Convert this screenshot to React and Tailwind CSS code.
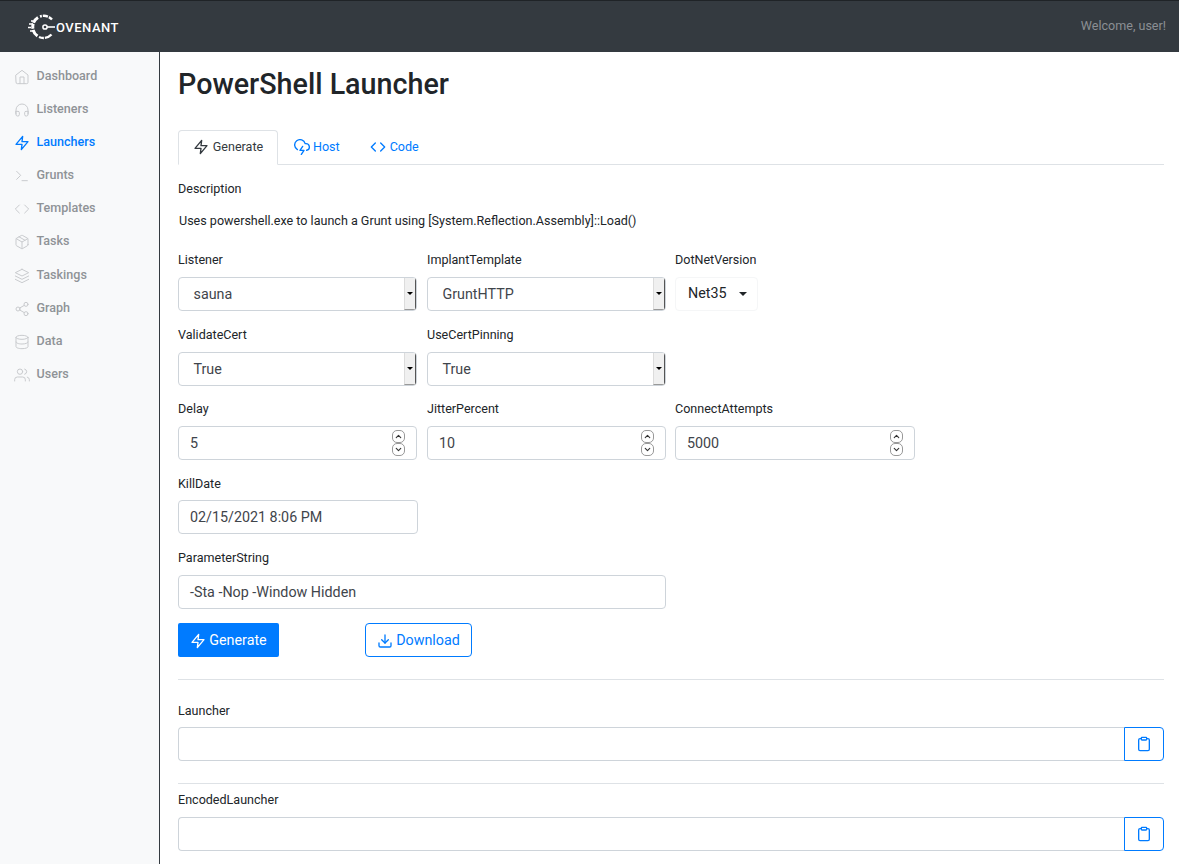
import React from "react";
import { FiHome, FiHeadphones, FiZap, FiTerminal, FiCode, FiPackage, FiLayers, FiShare2, FiDatabase, FiUsers, FiCloudLightning, FiDownload, FiClipboard, FiChevronUp, FiChevronDown } from "react-icons/fi";

const nav = [
  ["Dashboard", FiHome, "h-[33px]"],
  ["Listeners", FiHeadphones, "h-[33px]"],
  ["Launchers", FiZap, "h-[33px]"],
  ["Grunts", FiTerminal, "h-[33px]"],
  ["Templates", FiCode, "h-[33px]"],
  ["Tasks", FiPackage, "h-[33px]"],
  ["Taskings", FiLayers, "h-[34px] pt-[1px]"],
  ["Graph", FiShare2, "h-[33px]"],
  ["Data", FiDatabase, "h-[33px]"],
  ["Users", FiUsers, "h-[33px]"],
];

function Logo() {
  return (
    <div className="flex items-center mt-[1px]">
      <svg width="29" height="28" viewBox="0 0 29 28" fill="none" stroke="#fff">
        <path d="M24 6.5 A11 11 0 0 0 12 3.5" strokeWidth="2.4" strokeDasharray="4 1 5 1 6" />
        <path d="M10 4.5 A11 11 0 0 0 9.5 23" strokeWidth="3" strokeDasharray="7 1 5 1 9" />
        <path d="M11 24 A11 11 0 0 0 23.5 21.5" strokeWidth="2.4" strokeDasharray="5 1 8" />
        <circle cx="17" cy="14" r="2.1" strokeWidth="1.5" />
        <path d="M19 14 H27" strokeWidth="1.6" />
        <path d="M1 11 H5 M0 14.5 H3 M2 18 H5 M3 8 H5" strokeWidth="1.5" />
      </svg>
      <span className="-ml-[1px] text-white text-[13px] font-medium tracking-[0.5px] leading-none">OVENANT</span>
    </div>
  );
}

function Label({ children, className = "" }) {
  return <div className={`text-[12.55px] leading-[19px] text-[#212529] ${className}`}>{children}</div>;
}

function SelectBox({ value }) {
  return (
    <div className="h-[34px] w-[239px] flex border border-[#ced4da] rounded-[4px] bg-white overflow-hidden">
      <div className="flex-1 pl-[14.5px] text-[14.3px] leading-[32px] text-[#3f454b]">{value}</div>
      <div className="w-[12px] flex items-center justify-center bg-[#f0f0f0] border-l border-[#dcdcdc] border-r border-r-[#555] border-b border-b-[#999]">
        <div className="w-0 h-0 border-l-[3px] border-r-[3px] border-t-[3px] border-l-transparent border-r-transparent border-t-black" />
      </div>
    </div>
  );
}

function NumberBox({ value, className = "w-[239px]" }) {
  return (
    <div className={`relative h-[34px] border border-[#ced4da] rounded-[4px] bg-white pl-[11px] text-[14.3px] leading-[32px] text-[#3f454b] ${className}`}>
      {value}
      <div className="absolute right-[11px] top-[3px] flex flex-col">
        <div className="w-[13px] h-[13px] border border-[#999] rounded-[5px] flex items-center justify-center -mb-[0.5px]">
          <FiChevronUp size={9} strokeWidth={3} color="#333" />
        </div>
        <div className="w-[13px] h-[13px] border border-[#999] rounded-[5px] flex items-center justify-center">
          <FiChevronDown size={9} strokeWidth={3} color="#333" />
        </div>
      </div>
    </div>
  );
}

function TextBox({ value, className = "" }) {
  return (
    <div className={`h-[34px] border border-[#ced4da] rounded-[4px] bg-white pl-[11px] text-[14.3px] leading-[32px] text-[#3f454b] ${className}`}>
      {value}
    </div>
  );
}

function CopyField({ label, top, gap }) {
  return (
    <div className={top}>
      <Label className={gap}>{label}</Label>
      <div className="flex h-[34px]">
        <div className="flex-1 border border-[#ced4da] rounded-l-[4px] border-r-0 bg-white" />
        <div className="w-[40px] border border-[#007bff] rounded-r-[4px] flex items-center justify-center text-[#007bff]">
          <FiClipboard size={16} />
        </div>
      </div>
    </div>
  );
}

export default function App() {
  return (
    <div className="w-[1179px] h-[864px] overflow-hidden bg-white font-['Roboto',sans-serif] flex flex-col">
      <header className="h-[52px] shrink-0 bg-[#343a40] border-t border-[#1f2327] flex items-center justify-between pl-[28px] pr-[13px]">
        <Logo />
        <span className="text-[12.55px] text-[#8b8f94]">Welcome, user!</span>
      </header>
      <div className="flex flex-1 min-h-0">
        <aside className="w-[160px] shrink-0 bg-[#f8f9fa] border-r border-[#343a40] pt-[8px]">
          {nav.map(([name, Icon, h]) => {
            const active = name === "Launchers";
            return (
              <div key={name} className={`${h} flex items-center pl-[13.5px]`}>
                <Icon size={16} strokeWidth={active ? 2 : 1.5} className={`mr-[7px] ${active ? "text-[#007bff]" : "text-[#c9cbce]"}`} />
                <span className={`text-[12.55px] font-medium ${active ? "text-[#007bff]" : "text-[#8f9397]"}`}>{name}</span>
              </div>
            );
          })}
        </aside>
        <main className="flex-1 min-w-0 pl-[18px] pr-[15px]">
          <h1 className="text-[28.7px] font-medium leading-[34px] text-[#212529] pt-[15px] h-[63px] m-0">PowerShell Launcher</h1>
          <div className="flex h-[35px] border-b border-[#dee2e6] text-[12.55px] mt-[15px]">
            <div className="h-[35px] w-[100px] border border-[#dee2e6] border-b-white rounded-t-[4px] bg-white flex items-center justify-center gap-[4px] pb-[1px] text-[#343a40]">
              <FiZap size={16} />
              <span>Generate</span>
            </div>
            <div className="h-[34px] flex items-center pl-[16px] gap-[3px] text-[#007bff]">
              <FiCloudLightning size={16} />
              <span>Host</span>
            </div>
            <div className="h-[34px] flex items-center pl-[30px] gap-[4px] text-[#007bff]">
              <FiCode size={16} />
              <span>Code</span>
            </div>
          </div>
          <Label className="mt-[14px]">Description</Label>
          <div className="text-[12.55px] leading-[19px] text-[#212529] mt-[13px] pl-[1px]">Uses powershell.exe to launch a Grunt using [System.Reflection.Assembly]::Load()</div>

          <div className="grid grid-cols-[249px_248px_1fr] mt-[20px]">
            <div>
              <Label className="mb-[8px]">Listener</Label>
              <SelectBox value="sauna" />
            </div>
            <div>
              <Label className="mb-[8px]">ImplantTemplate</Label>
              <SelectBox value="GruntHTTP" />
            </div>
            <div>
              <Label className="mb-[8px]">DotNetVersion</Label>
              <div className="h-[34px] w-[83px] border border-[#f5f6f7] rounded-[4px] flex items-center pl-[12px] text-[14.3px] text-[#212529]">
                Net35
                <div className="ml-[12px] w-0 h-0 border-l-[4.5px] border-r-[4.5px] border-t-[4.5px] border-l-transparent border-r-transparent border-t-[#212529]" />
              </div>
            </div>
          </div>

          <div className="grid grid-cols-[249px_248px_1fr] mt-[13.5px]">
            <div>
              <Label className="mb-[8px]">ValidateCert</Label>
              <SelectBox value="True" />
            </div>
            <div>
              <Label className="mb-[8px]">UseCertPinning</Label>
              <SelectBox value="True" />
            </div>
          </div>

          <div className="grid grid-cols-[249px_248px_1fr] mt-[13.5px]">
            <div>
              <Label className="mb-[8px]">Delay</Label>
              <NumberBox value="5" />
            </div>
            <div>
              <Label className="mb-[8px]">JitterPercent</Label>
              <NumberBox value="10" />
            </div>
            <div>
              <Label className="mb-[8px]">ConnectAttempts</Label>
              <NumberBox value="5000" className="w-[240px]" />
            </div>
          </div>

          <div className="mt-[13.5px]">
            <Label className="mb-[7px]">KillDate</Label>
            <TextBox value="02/15/2021 8:06 PM" className="w-[240px]" />
          </div>

          <div className="mt-[14px]">
            <Label className="mb-[8px]">ParameterString</Label>
            <TextBox value="-Sta -Nop -Window Hidden" className="w-[488px]" />
          </div>

          <div className="flex mt-[14px]">
            <div className="h-[34px] w-[101px] pt-[2px] bg-[#007bff] rounded-[2px] text-white text-[14.3px] flex items-center justify-center gap-[3px]">
              <FiZap size={16} />
              <span>Generate</span>
            </div>
            <div className="ml-[86px] h-[34px] w-[107px] pt-[2px] border border-[#007bff] rounded-[4px] text-[#007bff] text-[14.3px] flex items-center justify-center gap-[3px]">
              <FiDownload size={16} />
              <span>Download</span>
            </div>
          </div>

          <div className="border-t border-[#dee2e6] mt-[22px]" />
          <CopyField label="Launcher" top="mt-[21px]" gap="mb-[7px]" />
          <div className="border-t border-[#dee2e6] mt-[22px]" />
          <CopyField label="EncodedLauncher" top="mt-[6px]" gap="mb-[8px]" />
        </main>
      </div>
    </div>
  );
}
